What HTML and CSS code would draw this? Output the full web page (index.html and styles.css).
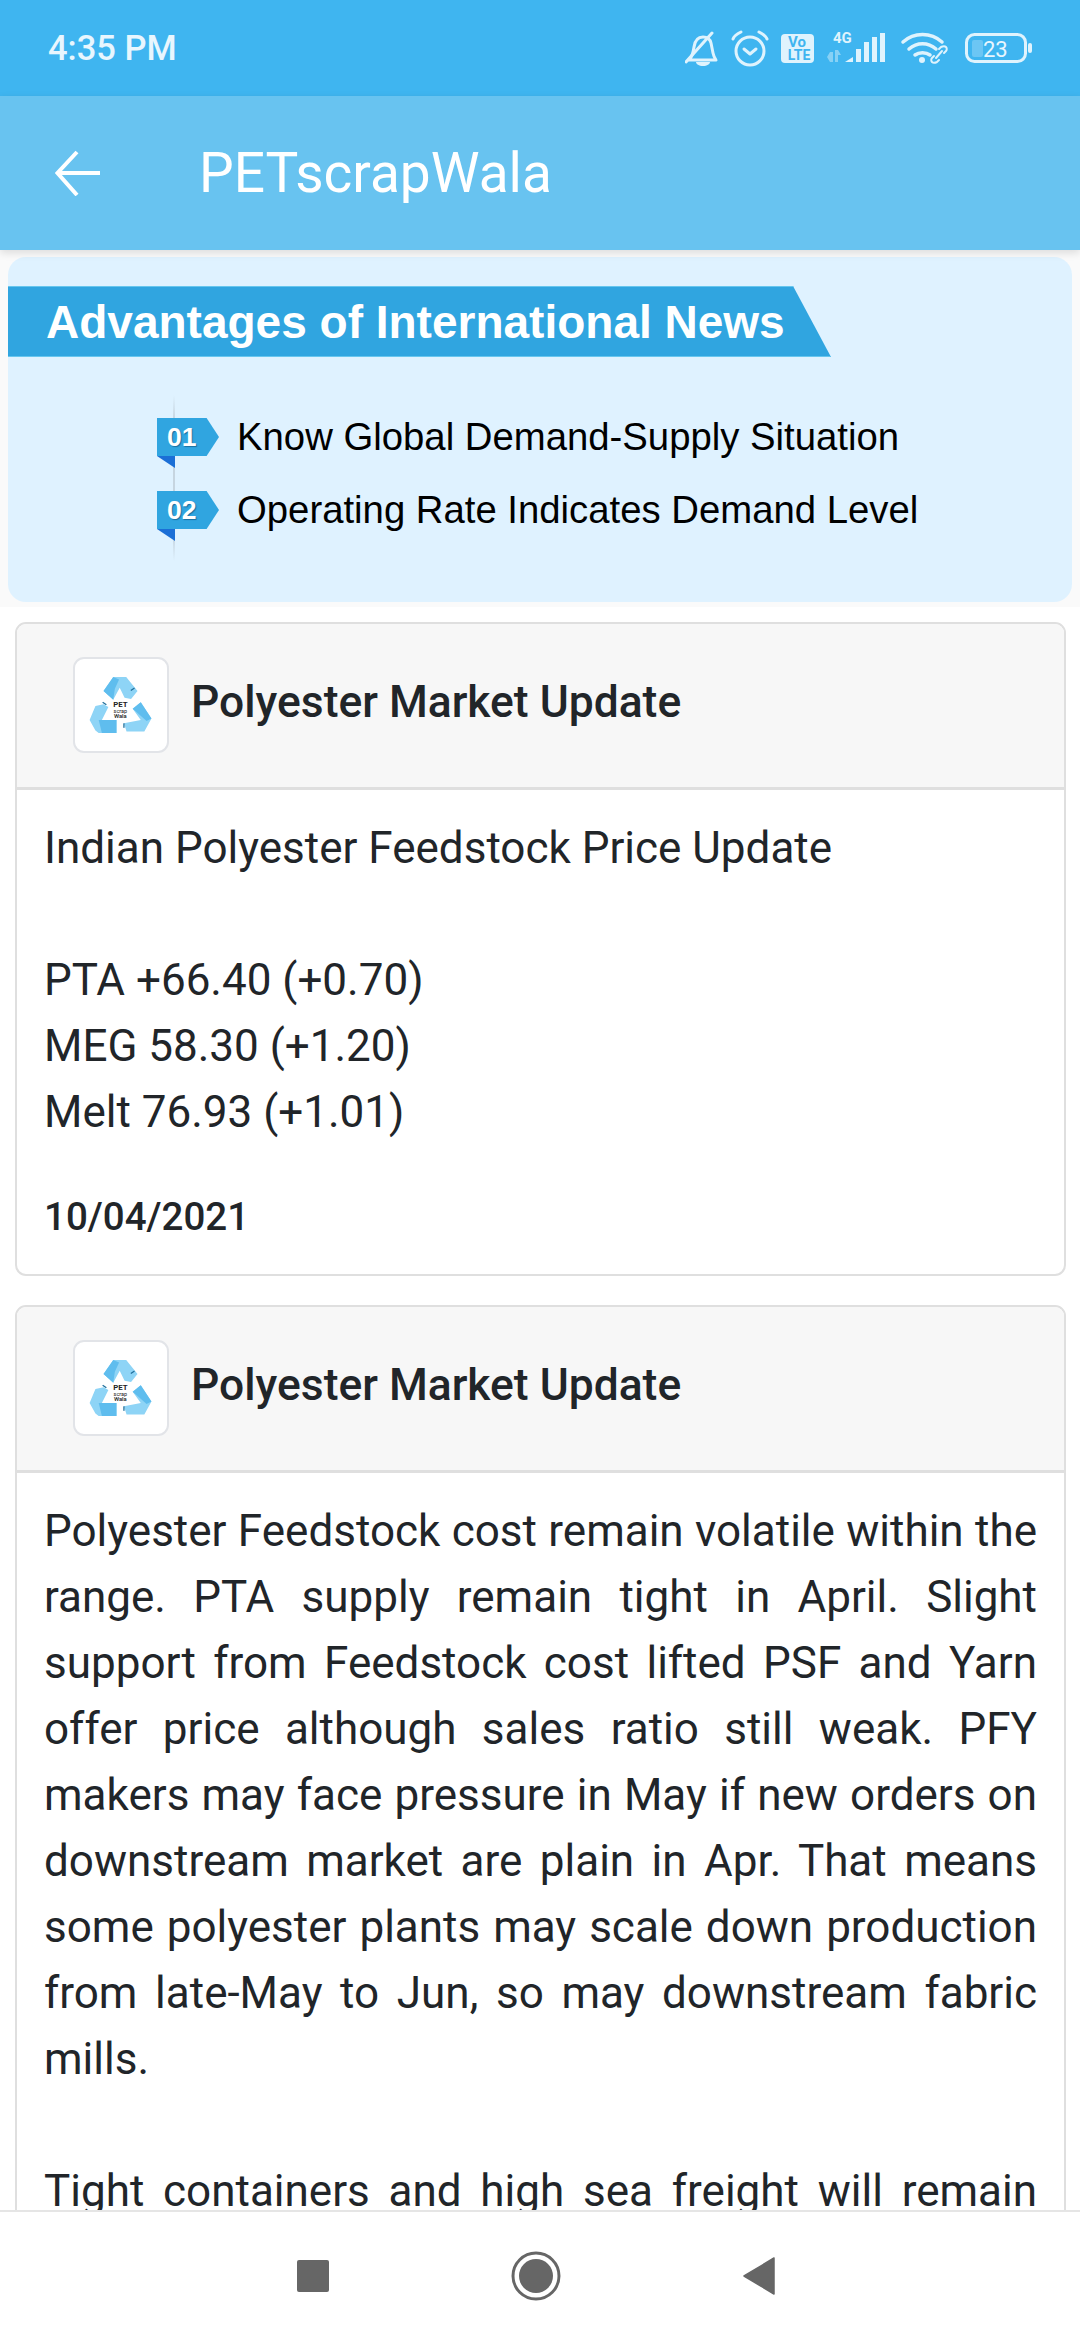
FILE: index.html
```html
<!DOCTYPE html>
<html lang="en">
<head>
<meta charset="utf-8">
<title>PETscrapWala</title>
<link rel="stylesheet" href="styles.css">
</head>
<body>
<div class="phone">
  <header class="status">
    <span class="time">4:35 PM</span>
    <div class="status-icons">
      <svg class="si" width="43" height="48" viewBox="685 24 43 48"><g fill="none" stroke="#dff3fd" stroke-width="3" stroke-linecap="round" stroke-linejoin="round"><path d="M689 60c3-3 4-6 5-13 1-7 4-10 9-10 4 0 7 2 8 6l2 10c.6 3 1.6 5 3 7z"/><path d="M686 62 712 33"/></g><path d="M696 62h14c0 2-3 4-7 4s-7-2-7-4z" fill="#dff3fd"/></svg>
      <svg class="si" width="50" height="48" viewBox="728 24 50 48"><g fill="none" stroke="#dff3fd" stroke-width="3" stroke-linecap="round" stroke-linejoin="round"><circle cx="750" cy="51" r="14"/><path d="M744 49l6 5 6-5"/><path d="M733 39c1-3 4-5 8-7"/><path d="M767 39c-1-3-4-5-8-7"/></g></svg>
      <svg class="si" width="44" height="48" viewBox="778 24 44 48"><rect x="781" y="34" width="33" height="29" rx="4" fill="#dff3fd"/><text x="797" y="47" class="volte-a">Vo</text><text x="799" y="59.5" class="volte-b">LTE</text></svg>
      <svg class="si" width="73" height="48" viewBox="822 24 73 48"><text x="833" y="43" class="net">4G</text><g fill="#dff3fd" opacity=".45"><path d="M830 52h3v10h-3l-3-5z"/><path d="M835 50h3l3 5h-3v7h-3z"/></g><g fill="#dff3fd"><path d="M845 62l8-5v5z"/><rect x="856" y="49" width="5" height="13"/><rect x="864" y="42" width="5" height="20"/><rect x="872" y="37" width="5" height="25"/><rect x="880" y="33" width="5" height="29"/></g></svg>
      <svg class="si" width="60" height="48" viewBox="895 24 60 48"><g fill="none" stroke="#dff3fd" stroke-linecap="round"><path d="M903 42c11-10 28-10 39 0" stroke-width="3.5"/><path d="M909 49c8-7 19-7 27 0" stroke-width="3.5"/><path d="M915 55c4-3 11-3 15 0" stroke-width="3.5"/><path d="M936 58l6-7M939 49l2-2c2-1 4-1 5 0s1 3 0 4l-2 2M939 60l-2 2c-2 1-4 1-5 0s-1-3 0-4l2-2" stroke-width="2"/></g><circle cx="922" cy="60" r="3" fill="#dff3fd"/></svg>
      <svg class="si" width="77" height="48" viewBox="955 24 77 48"><rect x="966.5" y="34.5" width="59" height="27" rx="8" fill="none" stroke="#dff3fd" stroke-width="3"/><rect x="972" y="40" width="11" height="17" rx="2" fill="#6cc6f4"/><text x="983" y="57" class="batt">23</text><rect x="1028" y="43" width="4" height="10" rx="2" fill="#dff3fd"/></svg>
    </div>
  </header>

  <nav class="appbar">
    <svg class="back" width="46" height="46" viewBox="0 0 46 46"><path d="M45 23H4M22 2 2.500 23 22 45" fill="none" stroke="#fff" stroke-width="4"/></svg>
    <h1 class="apptitle">PETscrapWala</h1>
  </nav>

  <main class="content">
    <section class="promo-wrap">
      <div class="promo">
        <h2 class="ribbon">Advantages of International News</h2>
        <ul class="points">
          <li class="point">
            <div class="badge"><span class="badge-face">01</span><span class="badge-fold"></span></div>
            <span class="point-text">Know Global Demand-Supply Situation</span>
          </li>
          <li class="point">
            <div class="badge"><span class="badge-face">02</span><span class="badge-fold"></span></div>
            <span class="point-text">Operating Rate Indicates Demand Level</span>
          </li>
        </ul>
      </div>
    </section>

    <article class="card">
      <header class="card-head">
        <div class="logo">
          <svg width="91" height="91" viewBox="40 29 281 276"><g fill="#8ed4f6"><path d="M125 125 155 82h40l35 43-20 25-20-4-15-31-20 37z"/><path d="M82 215 100 172l25-6 15 9-20 40h45v40h-55l-10-8z"/><path d="M215 180 240 160l33 50-22 40h-55l-8-25 52-10z"/></g><g fill="#5fbdee"><path d="M125 125 155 82l18 8-13 28-5 34z"/><path d="M110 215h55v40h-45z"/><path d="M215 180 240 160l33 50-15 8z"/></g><g fill="#1f6f9c"><rect x="121" y="162" width="14" height="4" transform="rotate(35 128 164)"/><rect x="208" y="118" width="14" height="4" transform="rotate(-35 215 120)"/><rect x="186" y="225" width="4" height="14"/></g><text x="177" y="176" class="logo-a">PET</text><text x="177" y="192" class="logo-b">scrap</text><text x="177" y="208" class="logo-c">Wala</text></svg>
        </div>
        <h3 class="card-title">Polyester Market Update</h3>
      </header>
      <div class="card-body">
        <p class="para">Indian Polyester Feedstock Price Update</p>
        <p class="para gap">PTA +66.40 (+0.70)<br>MEG 58.30 (+1.20)<br>Melt 76.93 (+1.01)</p>
        <p class="date">10/04/2021</p>
      </div>
    </article>

    <article class="card">
      <header class="card-head">
        <div class="logo">
          <svg width="91" height="91" viewBox="40 29 281 276"><g fill="#8ed4f6"><path d="M125 125 155 82h40l35 43-20 25-20-4-15-31-20 37z"/><path d="M82 215 100 172l25-6 15 9-20 40h45v40h-55l-10-8z"/><path d="M215 180 240 160l33 50-22 40h-55l-8-25 52-10z"/></g><g fill="#5fbdee"><path d="M125 125 155 82l18 8-13 28-5 34z"/><path d="M110 215h55v40h-45z"/><path d="M215 180 240 160l33 50-15 8z"/></g><g fill="#1f6f9c"><rect x="121" y="162" width="14" height="4" transform="rotate(35 128 164)"/><rect x="208" y="118" width="14" height="4" transform="rotate(-35 215 120)"/><rect x="186" y="225" width="4" height="14"/></g><text x="177" y="176" class="logo-a">PET</text><text x="177" y="192" class="logo-b">scrap</text><text x="177" y="208" class="logo-c">Wala</text></svg>
        </div>
        <h3 class="card-title">Polyester Market Update</h3>
      </header>
      <div class="card-body">
        <p class="para just">Polyester Feedstock cost remain volatile within the range. PTA supply remain tight in April. Slight support from Feedstock cost lifted PSF and Yarn offer price although sales ratio still weak. PFY makers may face pressure in May if new orders on downstream market are plain in Apr. That means some polyester plants may scale down production from late-May to Jun, so may downstream fabric mills.</p>
        <p class="para just-all gap">Tight containers and high sea freight will remain</p>
      </div>
    </article>
  </main>

  <footer class="navbar">
    <svg width="32" height="32" viewBox="0 0 32 32"><rect width="32" height="32" rx="2" fill="#666"/></svg>
    <svg width="50" height="50" viewBox="0 0 50 50"><circle cx="25" cy="25" r="23" fill="none" stroke="#666" stroke-width="3"/><circle cx="25" cy="25" r="17" fill="#666"/></svg>
    <svg width="32" height="38" viewBox="0 0 32 38"><path d="M31 1v36L1 19z" fill="#666" stroke="#666" stroke-width="1.5" stroke-linejoin="round"/></svg>
  </footer>
</div>
</body>
</html>
```
FILE: styles.css
```css
* { box-sizing: border-box; }
html, body { margin: 0; padding: 0; background: #fff; }
.phone {
  width: 1080px; height: 2340px; overflow: hidden;
  display: flex; flex-direction: column;
  font-family: Roboto, "Liberation Sans", sans-serif; color: #212529;
}
.status {
  height: 96px; flex: none; background: #3fb5f0;
  display: flex; align-items: center; justify-content: space-between;
  padding: 0 48px;
}
.time { font: 500 34.5px Roboto, sans-serif; color: #e8f6fe; }
.status-icons { display: flex; align-items: center; }
.si { display: block; }
.si text { font-family: Roboto, sans-serif; }
.si .volte-a { font-size: 15px; font-weight: 700; fill: #3fb5f0; text-anchor: middle; }
.si .volte-b { font-size: 14px; font-weight: 700; fill: #3fb5f0; text-anchor: middle; }
.si .net { font-size: 15px; font-weight: 700; fill: #dff3fd; }
.si .batt { font-size: 22px; fill: #e8f6fe; }

.appbar {
  height: 154px; flex: none; background: #68c3f0;
  display: flex; align-items: center; padding-left: 55px;
  box-shadow: 0 3px 8px rgba(0, 0, 0, .12);
  position: relative; z-index: 1;
}
.back { display: block; margin-right: 98px; }
.apptitle { margin: 0; font-size: 55px; font-weight: 400; color: #fff; }

.content { flex: 1; min-height: 0; overflow: hidden; background: #fff; }
.promo-wrap { background: #fafafa; padding: 7px 8px 5px; }
.promo {
  height: 345px; background: #dff2ff; border-radius: 18px;
  padding-top: 29px;
}
.ribbon {
  margin: 0; width: 823px; height: 71px; background: #30a5e0;
  border-block: 1px solid #66c6ee;
  clip-path: polygon(0 0, 785px 0, 100% 100%, 0 100%);
  color: #fff; font: 700 46px/71px "Liberation Sans", sans-serif;
  padding-left: 38px; white-space: nowrap;
}
.points {
  list-style: none; margin: 38px 0 0 149px; padding: 23px 0 20px;
  display: flex; flex-direction: column; gap: 23px;
  background: linear-gradient(to bottom, transparent, #c6d5e0 15%, #c6d5e0 85%, transparent) 16px 0 / 2px 100% no-repeat;
}
.point { display: flex; align-items: flex-start; height: 50px; }
.badge { width: 62px; flex: none; display: flex; flex-direction: column; }
.badge-face {
  height: 38px; background: #30a5e0; color: #fff;
  clip-path: polygon(0 0, 80% 0, 100% 50%, 80% 100%, 0 100%);
  font: 700 26.500px/38px "Liberation Sans", sans-serif; padding-left: 10px;
  text-shadow: 1px 1px 1px #1a6f9f;
}
.badge-fold {
  width: 18px; height: 12px; background: #1b6fd6;
  clip-path: polygon(0 0, 100% 0, 100% 100%);
}
.point-text {
  margin-left: 18px; font: 400 38.3px/38px "Liberation Sans", sans-serif;
  color: #000; white-space: nowrap;
}

.card {
  margin: 15px 14px 0 15px; border: 2px solid #dfdfdf; border-radius: 11px;
  overflow: hidden; background: #fff;
}
.card + .card { margin-top: 29px; }
.card-head {
  height: 166px; background: #f7f7f7; border-bottom: 3px solid #dfdfdf;
  display: flex; align-items: center; padding: 0 0 2px 56px;
}
.logo {
  width: 96px; height: 96px; background: #fff; border: 2px solid #e2e4e8;
  border-radius: 11px; display: flex; align-items: center; justify-content: center;
}
.logo svg { display: block; }
.logo text { text-anchor: middle; font-family: Roboto, sans-serif; fill: #222; }
.logo .logo-a { font-size: 24px; font-weight: 700; }
.logo .logo-b { font-size: 17px; }
.logo .logo-c { font-size: 18px; font-weight: 500; }
.card-title { margin: 0 0 6px 22px; font-size: 44.4px; font-weight: 500; color: #212529; }
.card-body { padding: 25px 27px 28px; }
.para { margin: 0; font-size: 44px; line-height: 66px; color: #212529; }
.gap { margin-top: 66px; }
.just { text-align: justify; }
.just-all { text-align: justify; text-align-last: justify; }
.date { margin: 43px 0 0; font-size: 38.5px; line-height: 58px; font-weight: 500; color: #212529; }

.navbar {
  height: 130px; flex: none; background: #fff; border-top: 2px solid #e5e5e5;
  display: flex; align-items: center; padding: 0 0 0 297px;
  gap: 182px;
}
```
